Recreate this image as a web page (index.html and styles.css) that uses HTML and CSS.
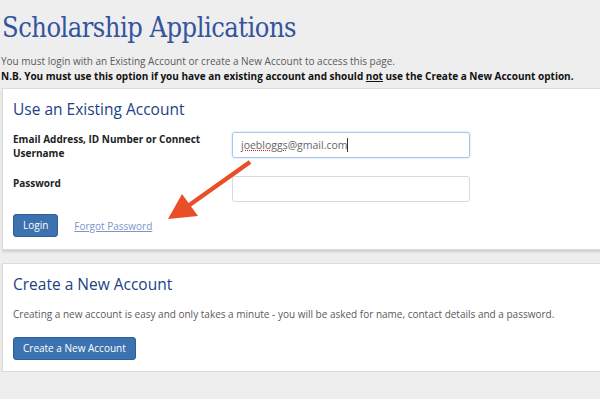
FILE: index.html
```html
<!DOCTYPE html>
<html lang="en">
<head>
    <meta charset="UTF-8">
    <meta name="viewport" content="width=device-width, initial-scale=1.0">
    <title>Scholarship Applications</title>
    <link rel="stylesheet" href="styles.css">
</head>
<body>
    <div class="page">
        <h1 class="page-title">Scholarship Applications</h1>
        <p class="intro">You must login with an Existing Account or create a New Account to access this page.</p>
        <p class="intro note">N.B. You must use this option if you have an existing account and should <u>not</u> use the Create a New Account option.</p>

        <div class="panel panel-login">
            <h2>Use an Existing Account</h2>
            <div class="form-row">
                <label for="username">Email Address, ID Number or Connect Username</label>
                <div class="field focused">
                    <span class="typed"><span class="misspelt">joebloggs</span>@gmail.com</span><span class="caret"></span>
                </div>
            </div>
            <div class="form-row">
                <label for="password">Password</label>
                <div class="field"></div>
            </div>
            <div class="actions">
                <button class="btn">Login</button>
                <a href="#" class="forgot">Forgot Password</a>
            </div>

            <!-- annotation arrow pointing at the forgot password link -->
            <svg class="arrow" width="100" height="70" viewBox="0 0 100 70">
                <line x1="82" y1="6" x2="20" y2="50" stroke="#ea4e28" stroke-width="4.5"/>
                <polygon points="0,63 14,38 30,60" fill="#ea4e28"/>
            </svg>
        </div>

        <div class="panel">
            <h2>Create a New Account</h2>
            <p class="blurb">Creating a new account is easy and only takes a minute - you will be asked for name, contact details and a password.</p>
            <button class="btn">Create a New Account</button>
        </div>
    </div>
</body>
</html>
```

FILE: styles.css
```css
:root {
    --page-bg: #eeeeee;
    --heading-blue: #223f85;
    --title-blue: #34549e;
    --btn-blue: #3d72b0;
    --link-blue: #7d95c8;
    --text-grey: #5a5a5a;
}

body {
    margin: 0;
    padding: 0;
    background-color: var(--page-bg);
    font-family: 'Open Sans', sans-serif;
    color: #222;
    overflow: hidden;
}

.page {
    padding: 0 0 0 2px;
}

.page-title {
    font-family: 'DejaVu Serif Condensed', 'DejaVu Serif', serif;
    font-weight: normal;
    font-size: 27px;
    letter-spacing: -0.5px;
    color: var(--title-blue);
    margin: 0;
    padding-top: 11px;
    line-height: 34px;
}

.intro {
    font-size: 10px;
    color: var(--text-grey);
    margin: 0 0 0 -1px;
    line-height: 15px;
}

.intro:first-of-type {
    margin-top: 9px;
}

.note {
    font-weight: bold;
    color: #111;
}

.panel {
    position: relative;
    background: #fff;
    border: 1px solid #dcdcdc;
    margin-right: -6px;
    box-shadow: 0 2px 2px rgba(0, 0, 0, 0.12);
    padding: 8px 10px 11px;
}

.panel-login {
    margin-top: 4px;
    margin-bottom: 13px;
    padding-bottom: 12px;
}

.panel h2 {
    font-size: 15.5px;
    font-weight: normal;
    color: var(--heading-blue);
    margin: 0 0 11px;
    line-height: 24px;
}

.form-row {
    display: flex;
    align-items: flex-start;
    margin-bottom: 16px;
}

.form-row label {
    width: 219px;
    font-size: 10px;
    font-weight: bold;
    line-height: 14px;
    color: #222;
}

.field {
    width: 236px;
    height: 24px;
    border: 1px solid #d9d9d9;
    border-radius: 3px;
    display: flex;
    align-items: center;
}

.field.focused {
    border-color: #a9c6ec;
    box-shadow: 0 0 2px rgba(102, 160, 230, 0.5);
}

.typed {
    font-size: 10.5px;
    color: #666;
    padding-left: 8px;
}

.misspelt {
    text-decoration: underline dotted #e02020;
}

.caret {
    display: inline-block;
    width: 1px;
    height: 14px;
    background: #333;
}

.actions {
    display: flex;
    align-items: center;
    gap: 16px;
    margin-top: -4px;
}

.btn {
    font-family: 'Open Sans', sans-serif;
    font-size: 10px;
    line-height: 15px;
    color: #fff;
    background: var(--btn-blue);
    border: 1px solid #2f5f98;
    border-radius: 3px;
    padding: 3px 9px;
    cursor: pointer;
}

.forgot {
    font-size: 10px;
    color: var(--link-blue);
}

.arrow {
    position: absolute;
    left: 165px;
    top: 67px;
}

.blurb {
    font-size: 10px;
    color: var(--text-grey);
    margin: 0 0 13px;
    line-height: 15px;
}
```
